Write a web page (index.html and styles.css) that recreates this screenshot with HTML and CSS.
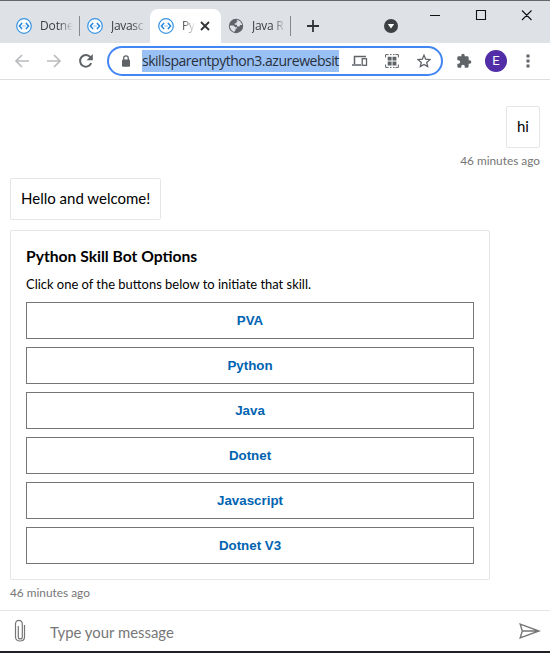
FILE: index.html
```html
<!DOCTYPE html>
<html lang="en">
<head>
<meta charset="utf-8">
<title>Python Skill Bot</title>
<link rel="stylesheet" href="styles.css">
</head>
<body>
<svg width="0" height="0" class="defs">
  <symbol id="bot" viewBox="0 0 16 16"><circle cx="8" cy="8" r="7.3" fill="#fff" stroke="#3794e5" stroke-width="1.2"/><path d="M6.1 5 3.4 8l2.7 3M9.9 5l2.7 3-2.7 3" fill="none" stroke="#2586dc" stroke-width="1.5"/><path d="M6.6 7.4h1v1.2h-1zM8.5 7.4h1v1.2h-1z" fill="#2586dc"/></symbol>
</svg>
<div class="window">
  <header class="tabs">
    <div class="tab t1"><svg class="fav"><use href="#bot"/></svg><span class="label">Dotne</span></div>
    <div class="tab t2"><svg class="fav"><use href="#bot"/></svg><span class="label">Javasc</span></div>
    <div class="tab active"><svg class="fav"><use href="#bot"/></svg><span class="label">Py</span>
      <svg class="close" viewBox="0 0 10 10"><path d="m1 1 8 8M9 1 1 9" stroke="#303235" stroke-width="1.8"/></svg></div>
    <div class="tab t4"><svg class="globe" viewBox="0 0 16 16"><circle cx="8" cy="8" r="7.2" fill="#5f6368"/><path d="M8.5 1.8c2.8.3 5.1 2.4 5.6 5.1l-1.800.1-1 1.400H9.400L8.600 6.700H6.800V5.200h1.600V3.800h1.300zM1.700 7.600h3.800l1.800 1.600h1.800v1.400H7.600v1.500l-1 .9v1.100C3.900 13.500 1.800 11 1.700 7.600z" fill="#dee1e6"/></svg><span class="label">Java R</span></div>
    <svg class="plus" viewBox="0 0 12 12"><path d="M6 0v12M0 6h12" stroke="#303235" stroke-width="1.8"/></svg>
    <svg class="search" viewBox="0 0 14 14"><circle cx="7" cy="7" r="7" fill="#3c4043"/><path d="M3.800 5h6.400L7 9.500z" fill="#fff"/></svg>
    <svg class="controls" viewBox="0 0 104 12"><path d="M1 6.500h10M47.500 1.500h9v9h-9zM93 1.500l9.500 9.500M102.500 1.500 93 11" fill="none" stroke="#111" stroke-width="1.1"/></svg>
  </header>
  <nav class="toolbar">
    <svg class="arrows" viewBox="0 0 50 16"><path d="M15 8H2M8 2 2 8l6 6M33 8h13M40 2l6 6-6 6" fill="none" stroke="#babcbe" stroke-width="1.7"/></svg>
    <svg class="reload" viewBox="0 0 16 16"><path d="M13.200 10.200A5.800 5.800 0 1 1 12.400 4.200" fill="none" stroke="#5f6368" stroke-width="2"/><path d="M14.800 1v6.200H8.600z" fill="#5f6368"/></svg>
    <div class="address">
      <svg class="lock" viewBox="0 0 10 12"><rect x="1" y="4.500" width="8" height="7.200" rx="1" fill="#5f6368"/><path d="M2.700 5V3.200a2.300 2.300 0 0 1 4.600 0V5" fill="none" stroke="#5f6368" stroke-width="1.300"/></svg>
      <span class="url">skillsparentpython3.azurewebsit</span>
      <svg class="devices" viewBox="0 0 16 12"><path d="M14 1.500H2.500V9M0 10h9" fill="none" stroke="#5f6368" stroke-width="1.500"/><rect x="10.200" y="3.700" width="4.300" height="6.600" fill="#fff" stroke="#5f6368" stroke-width="1.300"/></svg>
      <svg class="qr" viewBox="0 0 14 14"><path d="M.6 3.500V.6h3M10.400.6h3v2.900M13.400 10.500v2.900h-3M3.600 13.400h-3v-2.900M5 .6h1.500M8 .6h1.500M5 13.400h1.500M8 13.400h1.500" fill="none" stroke="#5f6368" stroke-width="1"/><path d="M2.700 2.700h3.900v3.900H2.700zM7.500 2.700h3.900v3.900H7.500zM2.700 7.500h3.900v3.900H2.700zM7.500 7.500h3.900v3.900H7.500z" fill="#5f6368"/></svg>
      <svg class="star" viewBox="0 0 14 14"><path d="m7 1.200 1.700 4 4.300.4-3.300 2.800 1 4.200L7 10.400l-3.700 2.200 1-4.200L1 5.600l4.300-.4z" fill="none" stroke="#5f6368" stroke-width="1.300"/></svg>
    </div>
    <svg class="puzzle" viewBox="0 0 24 24"><path d="M20.500 11H19V7a2 2 0 0 0-2-2h-4V3.500a2.500 2.500 0 0 0-5 0V5H4a2 2 0 0 0-2 2v3.800h1.500a2.700 2.700 0 0 1 0 5.400H2V20c0 1.100.9 2 2 2h3.800v-1.500a2.700 2.700 0 0 1 5.400 0V22H17a2 2 0 0 0 2-2v-4h1.500a2.500 2.500 0 0 0 0-5z" fill="#5f6368"/></svg>
    <div class="avatar">E</div>
    <svg class="menu" viewBox="0 0 4 14"><path d="M.5.600h3v3h-3zM.5 5.500h3v3h-3zM.5 10.400h3v3h-3z" fill="#5f6368"/></svg>
  </nav>
  <main class="chat">
    <div class="bubble mine">hi</div>
    <div class="time right">46 minutes ago</div>
    <div class="bubble bot">Hello and welcome!</div>
    <section class="card">
      <h1>Python Skill Bot Options</h1>
      <p>Click one of the buttons below to initiate that skill.</p>
      <div class="actions">
        <button>PVA</button><button>Python</button><button>Java</button><button>Dotnet</button><button>Javascript</button><button>Dotnet V3</button>
      </div>
    </section>
    <div class="time left">46 minutes ago</div>
  </main>
  <footer class="composer">
    <svg class="clip" viewBox="0 0 12 24"><path d="M10.500 6v12c0 5.300-9 5.300-9 0V5c0-4.800 6.800-4.800 6.800 0v13c0 2.600-4 2.600-4 0V7" fill="none" stroke="#767676" stroke-width="1.200"/></svg>
    <span class="hint">Type your message</span>
    <svg class="send" viewBox="0 0 22 16"><path d="M1.200 1.200 20 8 1.200 14.800 3.300 8zM3.300 8H20" fill="none" stroke="#767676" stroke-width="1.400"/></svg>
  </footer>
</div>
</body>
</html>
```
FILE: styles.css
```css
* { box-sizing: border-box; }
body { margin: 0; background: #fff; font-family: Lato, "Liberation Sans", sans-serif; }
svg { display: block; flex: none; }
.defs { position: absolute; }
.window { width: 550px; height: 653px; display: flex; flex-direction: column; overflow: hidden; border-bottom: 2px solid #202124; }
.tabs { height: 43px; flex: none; display: flex; background: #dee1e6; border-top: 1px solid #66676a; font: 12px/16px "Open Sans", sans-serif; color: #3c4043; }
.tab { height: 34px; margin-top: 8px; display: flex; align-items: center; flex: none; }
.fav { width: 16px; height: 16px; }
.globe { width: 16px; height: 16px; }
.label { flex: none; margin-left: 8px; white-space: nowrap; letter-spacing: -.3px; -webkit-mask-image: linear-gradient(90deg, #000 calc(100% - 14px), transparent); mask-image: linear-gradient(90deg, #000 calc(100% - 14px), transparent); }
.t1 { width: 80px; padding-left: 16px; background: linear-gradient(#85888c, #85888c) right center / 1px 20px no-repeat; }
.t1 .label { width: 33px; letter-spacing: -.15px; }
.t2 { width: 70px; padding-left: 7px; }
.t2 .label { width: 35px; }
.active { width: 71px; padding-left: 8px; background: #fff; border-radius: 8px 8px 0 0; }
.active .label { width: 14px; letter-spacing: -.4px; }
.close { width: 10px; height: 10px; margin-left: 4px; }
.t4 { width: 70px; padding-left: 7px; background: linear-gradient(#85888c, #85888c) right center / 1px 20px no-repeat; }
.t4 .label { width: 34px; }
.plus { width: 12px; height: 12px; margin: 19px 0 0 16px; }
.search { width: 14px; height: 14px; margin: 18px 0 0 65px; }
.controls { width: 104px; height: 12px; margin: 8px 0 0 31px; }
.toolbar { height: 37px; flex: none; display: flex; align-items: center; border-bottom: 1px solid #dcdee1; }
.arrows { width: 50px; height: 16px; margin-left: 14px; }
.reload { width: 16px; height: 16px; margin-left: 14px; }
.address { width: 336px; height: 30px; margin-left: 13px; border: 2px solid #4285f4; border-radius: 15px; display: flex; align-items: center; }
.lock { width: 10px; height: 12px; margin-left: 12px; }
.url { width: 197px; height: 22px; margin-left: 11px; background: #9ac1f5; font: 14px/22px "Open Sans", sans-serif; color: #29303a; white-space: nowrap; letter-spacing: -.48px; }
.devices { width: 16px; height: 12px; margin-left: 13px; }
.qr { width: 14px; height: 14px; margin-left: 17px; }
.star { width: 14px; height: 14px; margin-left: 18px; }
.puzzle { width: 16px; height: 16px; margin-left: 13px; }
.avatar { width: 22px; height: 22px; margin-left: 13px; border-radius: 50%; background: #512da8; color: #fff; font: 13px/22px Roboto, sans-serif; text-align: center; }
.menu { width: 4px; height: 14px; margin-left: 19px; }
.chat { flex: 1; padding: 26px 10px 0; display: flex; flex-direction: column; align-items: flex-start; }
.bubble { height: 42px; border: 1px solid #e6e6e6; border-radius: 2px; padding: 0 10px; font-size: 15px; line-height: 39px; white-space: nowrap; color: #000; }
.mine { width: 34px; align-self: flex-end; }
.bot { width: 151px; margin-top: 9px; }
.time { height: 16px; margin-top: 5px; font-size: 11.850px; line-height: 16px; color: #767676; white-space: nowrap; }
.right { align-self: flex-end; }
.card { width: 480px; height: 350px; margin-top: 10px; padding: 15px; border: 1px solid #e6e6e6; border-radius: 2px; color: #000; }
.card h1 { margin: 0; font-size: 15.650px; line-height: 20px; font-weight: 700; white-space: nowrap; }
.card p { margin: 9px 0 9px; font-size: 12.950px; line-height: 18px; white-space: nowrap; }
.actions { display: flex; flex-direction: column; gap: 8px; }
.actions button { height: 37px; padding: 0; border: 1px solid #767676; background: #fff; color: #0063b1; font: 700 13.333px "Liberation Sans", sans-serif; }
.composer { height: 41px; flex: none; border-top: 1px solid #e6e6e6; display: flex; align-items: center; color: #767676; font-size: 14.900px; }
.clip { width: 12px; height: 24px; margin-left: 14px; }
.hint { width: 460px; margin-left: 24px; padding-top: 1px; }
.send { width: 22px; height: 16px; margin-left: 9px; }
```
